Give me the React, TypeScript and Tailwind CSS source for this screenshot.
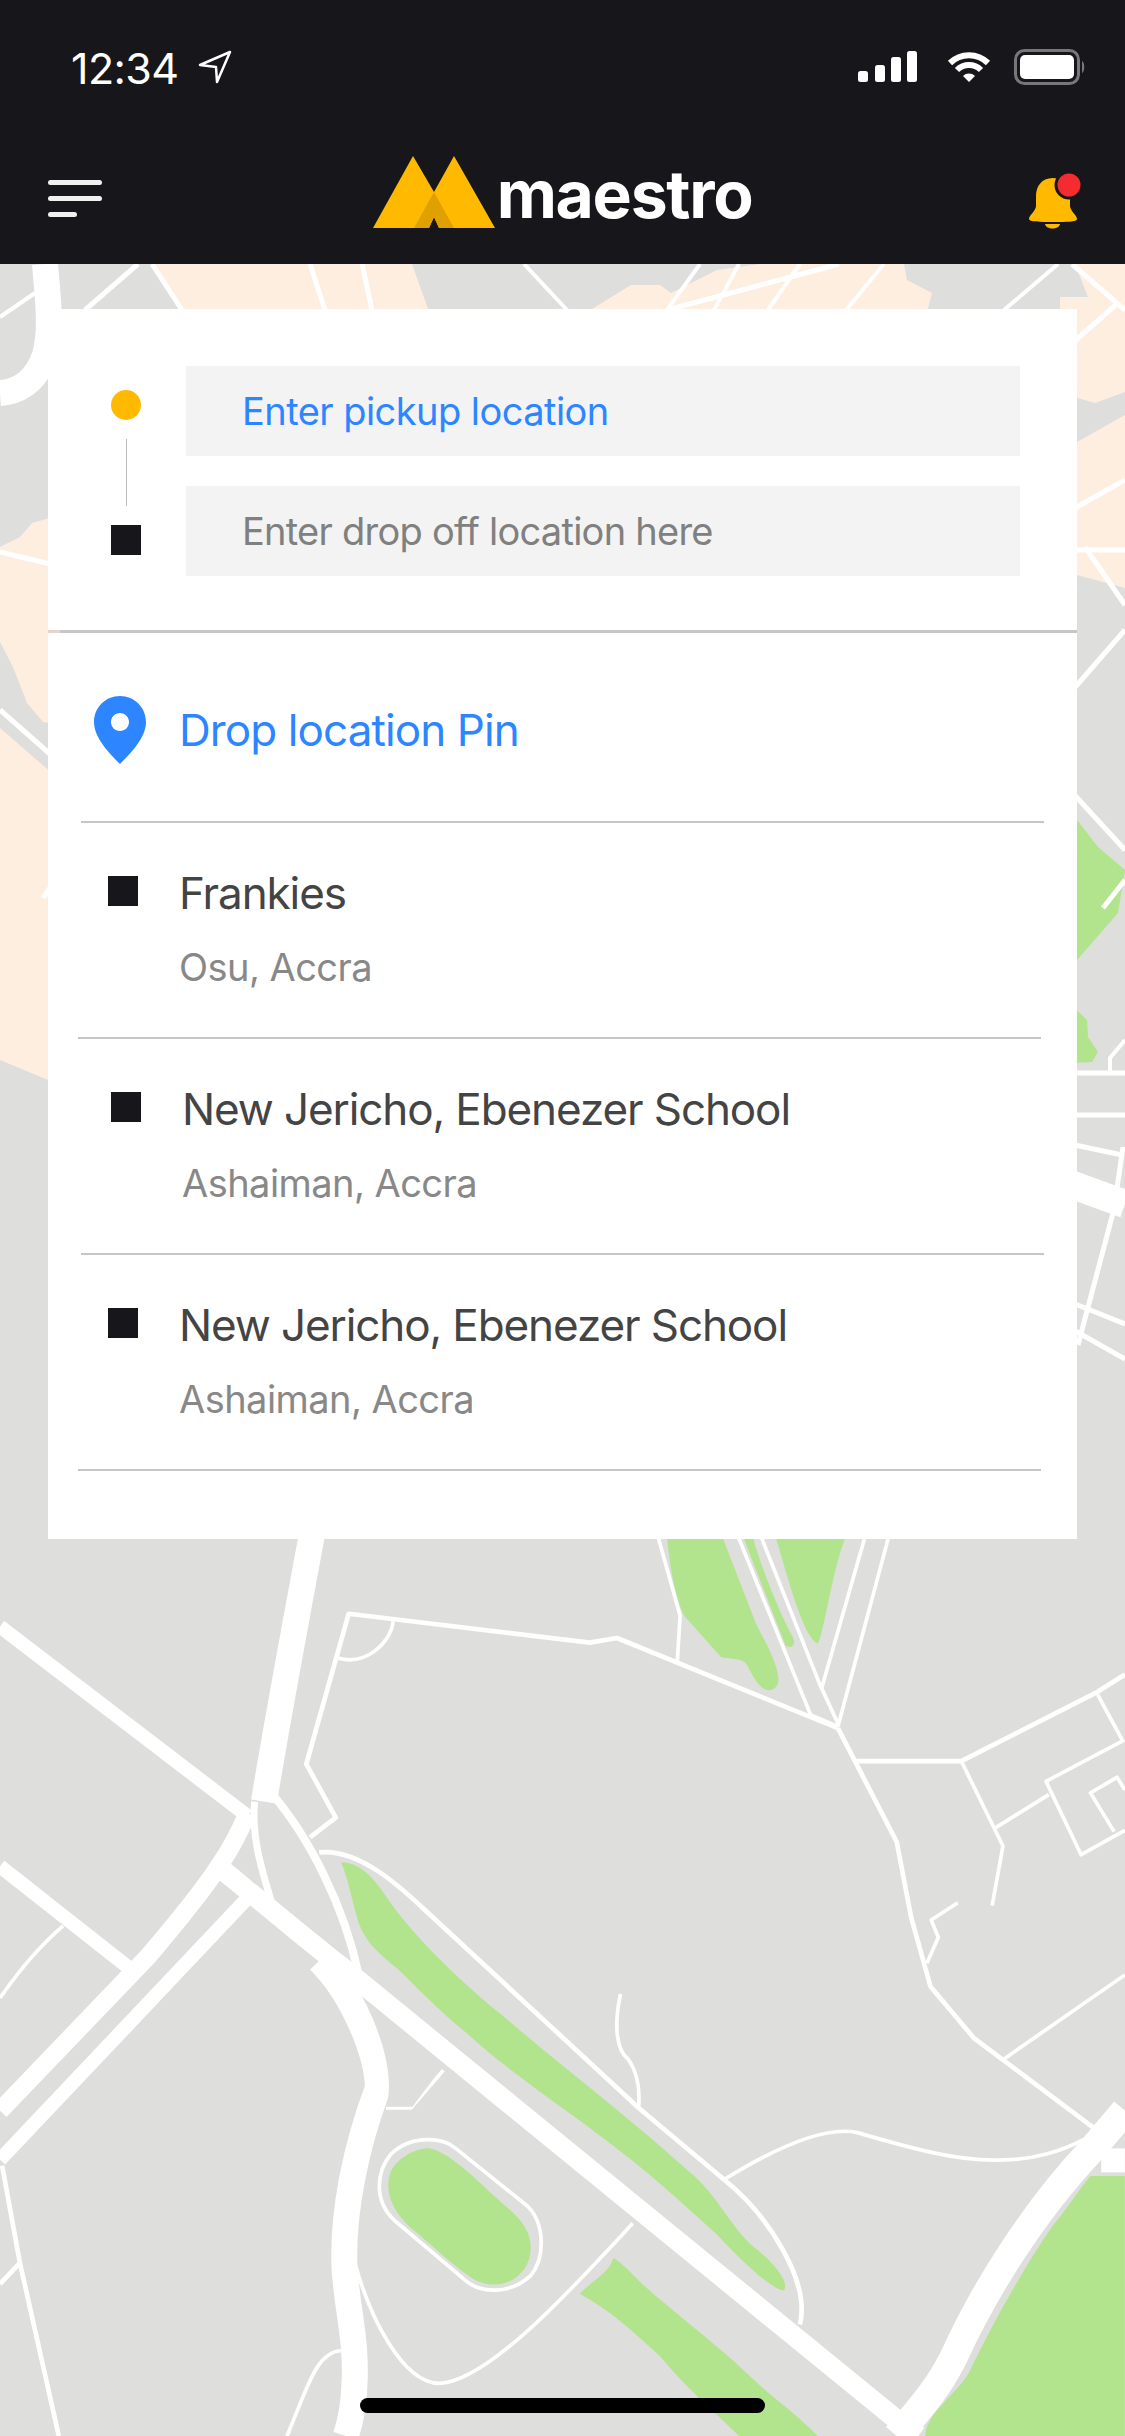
import React from "react";

const bottomGreens = [
  "M930 15C935 80 945 130 955 150L1005 220C1020 225 1035 220 1042 235C1050 255 1060 280 1075 277C1090 270 1085 250 1080 230C1070 195 1055 170 1050 150L1008 15Z",
  "M1037 15L1095 200C1105 208 1110 195 1105 185C1085 140 1060 60 1050 15Z",
  "M1082 15C1100 90 1120 185 1140 197C1150 170 1160 70 1178 15Z",
  "M475 575C510 575 530 620 550 655C590 720 650 790 700 840C780 925 880 1020 960 1110C1000 1150 1020 1210 1050 1240C1080 1270 1100 1300 1093 1316C1075 1315 1030 1260 1000 1220C960 1175 920 1130 880 1090C800 1010 720 950 650 870C610 830 580 790 555 760C530 735 510 715 500 680C490 640 485 600 475 575Z",
  "M597 1070C625 1075 660 1120 700 1165C730 1195 745 1220 738 1260C730 1295 700 1315 670 1302C650 1295 600 1235 570 1205C545 1175 535 1140 545 1110C555 1085 580 1070 597 1070Z",
  "M855 1260C870 1270 885 1295 900 1310C950 1365 1010 1420 1050 1470C1080 1505 1110 1530 1140 1568L1030 1568C1000 1530 960 1490 920 1430C880 1385 850 1350 808 1322C825 1300 850 1285 855 1260Z",
  "M1520 1118L1568 1118L1568 1568L1290 1568C1290 1530 1330 1500 1350 1460C1385 1370 1430 1270 1470 1200C1490 1170 1505 1140 1520 1118Z",
];

// [path, stroke width], path coordinates are in the squeezed space of the lower map group
const bottomRoads: [string, number][] = [
  ["M0 167L345 495", 14],
  ["M0 582L180 758", 14],
  ["M345 490C335 520 320 555 306 580C285 620 260 660 205 740L0 1005", 18],
  ["M352 628L0 1090", 14],
  ["M312 590L420 700L490 770L1250 1540L1280 1568", 20],
  ["M436 0C415 140 385 340 368 470", 26],
  ["M355 470C350 530 365 590 380 650", 7],
  ["M378 455C430 530 480 650 500 770", 8],
  ["M445 745C490 800 525 900 527 965C495 1070 478 1180 480 1270C482 1340 498 1400 494 1480C493 1520 488 1545 482 1568", 26],
  ["M1250 1568C1290 1510 1310 1480 1330 1430C1370 1320 1440 1180 1520 1075L1568 1005", 28],
  ["M1535 1091H1568", 24],
  ["M3 1100L28 1270L82 1568", 4],
  ["M28 1268L0 1305", 4],
  ["M88 685C55 720 25 765 0 810", 3],
  ["M432 532L468 498L427 405L486 145L822 195L860 187L1168 343", 4],
  ["M548 158C545 195 510 235 472 222", 3],
  ["M1168 343L1250 540L1270 670L1297 790L1358 880L1525 1035", 4],
  ["M1190 400H1340L1530 280L1568 250", 4],
  ["M1340 400L1398 547L1383 650", 3],
  ["M1388 515L1462 458", 3],
  ["M1530 285L1565 365L1458 435L1507 562L1568 520", 3],
  ["M1553 522L1520 455L1557 428L1568 450", 3],
  ["M1292 750L1308 705L1298 675L1335 645", 3],
  ["M1400 915L1568 770", 3],
  ["M918 15L948 148L944 230", 3],
  ["M1030 15L1130 320L1168 340", 3],
  ["M1062 15L1142 265L1168 335", 3],
  ["M1205 15L1145 275", 3],
  ["M1238 15L1168 340", 3],
  ["M445 558C500 550 560 620 590 655L890 1000L1010 1125C1070 1185 1130 1300 1115 1375", 4],
  ["M865 803C855 860 860 900 875 915C890 940 892 975 890 1000", 3],
  ["M1008 1125C1080 1070 1150 1030 1195 1043C1270 1070 1340 1095 1400 1090C1440 1090 1480 1075 1510 1055", 3],
  ["M882 1200C800 1310 680 1475 612 1477C560 1475 515 1360 495 1270", 3],
  ["M538 1000H573L618 935", 3],
  ["M597 1055C620 1055 630 1065 640 1075L735 1170C760 1200 760 1260 740 1290C710 1325 670 1320 650 1300L550 1195C520 1160 525 1110 545 1080C560 1062 580 1055 597 1055Z", 3],
  ["M475 1420C440 1425 430 1480 400 1568", 3],
];

// these are in plain page pixels
const topRoads: [string, number][] = [
  ["M45 264C48 300 52 330 45 355C35 385 15 392 0 393", 26],
  ["M35 293L0 317", 4],
  ["M138 264L85 310", 5],
  ["M152 264L182 310", 5],
  ["M310 264L325 310", 5],
  ["M362 264L372 310", 5],
  ["M524 264L567 310", 4],
  ["M700 264L667 310", 4],
  ["M739 264L714 310", 4],
  ["M839 264L667 310", 5],
  ["M800 264L768 310", 4],
  ["M884 264L846 310", 4],
  ["M1058 264L1004 310", 4],
  ["M1072 264L1125 310", 5],
  ["M1070 345L1118 303", 5],
  ["M0 552L50 564", 5],
  ["M0 710L50 754", 5],
  ["M43 898L50 888", 5],
  ["M1070 511L1125 480", 5],
  ["M1070 550H1125", 5],
  ["M1085 547L1125 605", 5],
  ["M1070 693L1125 630", 5],
  ["M1070 790L1125 850", 5],
  ["M1103 908L1125 880", 5],
  ["M1110 1072V1058L1125 1040", 4],
  ["M1070 1073H1125", 5],
  ["M1070 1115H1125", 5],
  ["M1070 1144L1122 1155", 5],
  ["M1123 1147L1117 1188", 5],
  ["M1113 1213L1078 1345", 5],
  ["M1070 1184L1125 1204", 28],
  ["M1070 1302L1125 1324", 5],
  ["M1070 1328L1125 1359", 5],
];

function MapBackground() {
  return (
    <svg className="absolute inset-0 h-full w-full" viewBox="0 264 1125 2172" preserveAspectRatio="none">
      <rect x="0" y="264" width="1125" height="2172" fill="#dededc" />

      <g fill="#fdeee0">
        <path d="M152 264H412L432 320H185Z" />
        <path d="M574 320L631 285H660L671 293L717 270L760 264H904L907 280L932 293L925 320Z" />
        <path d="M1060 264H1125V392L1095 403L1060 393Z" />
        <path d="M1060 442H1077L1125 415V588L1077 575H1060Z" />
        <path d="M0 547L20 537L32 523L60 515V1085L0 1060Z" />
      </g>
      <path d="M0 642L13 667L27 703L43 722L60 725V780L0 728Z" fill="#dededc" />
      <path d="M1060 264H1075L1088 297H1060Z" fill="#dededc" />

      <g fill="#b2e48d">
        <path d="M1070 812L1077 820L1098 847L1125 870L1118 913L1077 960L1070 965Z" />
        <path d="M1070 1005L1077 1010L1087 1020L1088 1037L1098 1052L1092 1062L1070 1063Z" />
      </g>

      <g fill="none" stroke="#ffffff">
        {topRoads.map(([d, w]) => (
          <path key={d} d={d} strokeWidth={w} />
        ))}
      </g>

      <g transform="translate(0 1530) scale(0.7174 0.5778)">
        <g fill="#b2e48d">
          {bottomGreens.map((d) => (
            <path key={d} d={d} />
          ))}
        </g>
        <g fill="none" stroke="#ffffff" strokeLinejoin="round">
          {bottomRoads.map(([d, w]) => (
            <path key={d} d={d} strokeWidth={w <= 4 ? w + 0.7 : w} vectorEffect="non-scaling-stroke" />
          ))}
        </g>
        <g fill="#dededc">
          <path d="M345 535L325 580L358 615C350 585 345 560 345 535Z" />
          <path d="M372 470C362 510 365 570 390 647L478 736C468 660 430 540 372 470Z" />
          <path d="M514 830L615 932L575 998H538C548 960 540 900 514 830Z" />
        </g>
      </g>
    </svg>
  );
}

function StatusBar() {
  return (
    <div className="flex h-[136px] items-center justify-between pl-[71px] pr-[39px]">
      <div className="flex items-center gap-[20px]">
        <span className="text-[43px] leading-none text-white tracking-[-0.6px]">12:34</span>
        <svg width="34" height="34" viewBox="0 0 34 34" fill="none" className="-mt-[2px]">
          <path d="M32 2L2 15L18 17L19 32Z" stroke="#fff" strokeWidth="2.5" strokeLinejoin="round" />
        </svg>
      </div>
      <div className="-mt-[3px] flex items-center">
        <svg width="59" height="32" viewBox="0 0 59 32" fill="#fff">
          <rect x="0" y="20" width="10" height="11" rx="2.5" />
          <rect x="17" y="14" width="10" height="17" rx="2.5" />
          <rect x="33" y="6" width="10" height="25" rx="2.5" />
          <rect x="49" y="0" width="10" height="31" rx="2.5" />
        </svg>
        <svg width="44" height="32" viewBox="0 0 44 32" fill="none" stroke="#fff" strokeWidth="6" className="ml-[30px]">
          <path d="M3 12A27 27 0 0 1 41 12" />
          <path d="M10 19A17 17 0 0 1 34 19" />
          <path d="M16 25L22 31L28 25A8.5 8.5 0 0 0 16 25Z" fill="#fff" stroke="none" />
        </svg>
        <svg width="72" height="36" viewBox="0 0 72 36" fill="none" className="ml-[23px]">
          <rect x="1.5" y="1.5" width="63" height="33" rx="9" stroke="#77777b" strokeWidth="3" />
          <rect x="6" y="6" width="54" height="24" rx="5" fill="#fff" />
          <path d="M68 12C71 13 71 23 68 24Z" fill="#77777b" />
        </svg>
      </div>
    </div>
  );
}

function Logo() {
  return (
    <div className="-ml-[9px] -mt-[16px] flex items-center">
      <svg width="124" height="74" viewBox="372 155 124 74">
        <path d="M373 228L413 156L434 192L454 156L495 228H439L434 217L429 228Z" fill="#ffba00" />
        <path d="M434 192L414 228H429L434 217L439 228H454Z" fill="#e0a000" />
      </svg>
      <span className="ml-[1px] mt-[3px] text-[66px] leading-none font-bold tracking-[-1.3px] text-white">maestro</span>
    </div>
  );
}

function NavBar() {
  return (
    <div className="grid h-[128px] grid-cols-[1fr_auto_1fr] items-center pl-[48px] pr-[40px]">
      <div className="-mt-[4px] flex w-[54px] flex-col gap-[11px]">
        <div className="h-[5px] w-[54px] rounded-full bg-[#f0f0f0]" />
        <div className="h-[5px] w-[54px] rounded-full bg-[#f0f0f0]" />
        <div className="h-[5px] w-[29px] rounded-full bg-[#f0f0f0]" />
      </div>
      <Logo />
      <svg width="60" height="62" viewBox="1025 170 60 62" className="mt-[2px] justify-self-end">
        <path
          d="M1053 178C1041 178 1036 187 1036 196V206C1036 211 1029 215 1029 219C1029 222 1040 222 1053 222C1066 222 1077 222 1077 219C1077 215 1070 211 1070 206V196C1070 187 1065 178 1053 178Z"
          fill="#ffba00"
        />
        <path d="M1045 224H1060C1059 230 1046 230 1045 224Z" fill="#ffba00" />
        <circle cx="1069" cy="185" r="13" fill="#f42c32" stroke="#16161b" strokeWidth="3" />
      </svg>
    </div>
  );
}

function PlaceRow({ title, place, offset }: { title: string; place: string; offset?: boolean }) {
  return (
    <div className={`${offset ? "ml-[33px]" : "ml-[30px]"} flex h-[216px] w-[963px] items-start border-b-2 border-[#c6c6c6] pl-[30px]`}>
      <div className="mt-[53px] h-[30px] w-[30px] bg-[#16161b]" />
      <div className="ml-[41px] pt-[46px]">
        <div className="text-[44px] leading-[48px] tracking-[-1.1px] text-[#444444]">{title}</div>
        <div className="mt-[26px] text-[38px] leading-[48px] tracking-[-0.55px] text-[#888888]">{place}</div>
      </div>
    </div>
  );
}

export default function App() {
  return (
    <div className="flex h-[2436px] w-[1125px] flex-col overflow-hidden font-['Inter',sans-serif]">
      <header className="h-[264px] shrink-0 bg-[#16161b]">
        <StatusBar />
        <NavBar />
      </header>

      <main className="relative flex-1">
        <MapBackground />

        <div className="relative mx-[48px] mt-[45px] w-[1029px]">
          <section className="flex h-[321px] bg-white pl-[63px] pr-[57px]">
            <div className="flex w-[30px] flex-col items-center pt-[81px]">
              <div className="h-[30px] w-[30px] rounded-full bg-[#ffba00]" />
              <div className="mt-[19px] h-[67px] w-px bg-[#bbbbbb]" />
              <div className="mt-[19px] h-[30px] w-[30px] bg-[#16161b]" />
            </div>
            <div className="ml-[45px] flex flex-1 flex-col gap-[30px] pt-[57px]">
              <div className="flex h-[90px] items-center bg-[#f3f3f3] pl-[56px] text-[38px] tracking-[-0.55px] text-[#2d86ff]">
                Enter pickup location
              </div>
              <div className="flex h-[90px] items-center bg-[#f3f3f3] pl-[56px] text-[38px] tracking-[-0.75px] text-[#808080]">
                Enter drop off location here
              </div>
            </div>
          </section>

          <div className="h-[3px] bg-black/10" />

          <section className="bg-white pb-[68px]">
            <div className="ml-[33px] flex h-[190px] w-[963px] items-center border-b-2 border-[#c6c6c6] pl-[13px] pt-[6px]">
              <svg width="52" height="68" viewBox="0 0 52 68">
                <path
                  d="M26 0C11.5 0 0 11.5 0 26C0 42 16 58 26 68C36 58 52 42 52 26C52 11.5 40.5 0 26 0ZM26 17C31 17 35 21 35 26C35 31 31 35 26 35C21 35 17 31 17 26C17 21 21 17 26 17Z"
                  fill="#2d86ff"
                  fillRule="evenodd"
                />
              </svg>
              <span className="ml-[33px] text-[44px] leading-none tracking-[-0.9px] text-[#2d86ff]">Drop location Pin</span>
            </div>
            <PlaceRow title="Frankies" place="Osu, Accra" />
            <PlaceRow title="New Jericho, Ebenezer School" place="Ashaiman, Accra" offset />
            <PlaceRow title="New Jericho, Ebenezer School" place="Ashaiman, Accra" />
          </section>
        </div>

        <div className="absolute bottom-[23px] left-[360px] h-[15px] w-[405px] rounded-full bg-black" />
      </main>
    </div>
  );
}
